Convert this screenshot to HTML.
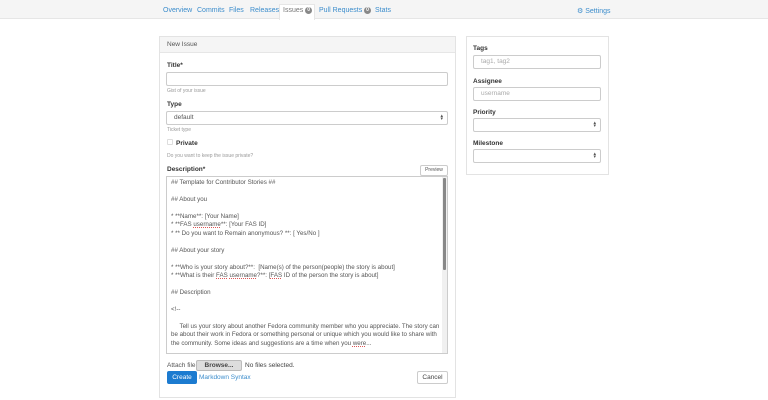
<!DOCTYPE html>
<html><head><meta charset="utf-8"><style>
*{box-sizing:border-box;margin:0;padding:0}
body{width:768px;height:400px;background:#fff;font-family:"Liberation Sans",sans-serif;color:#333;position:relative;overflow:hidden;font-size:7px}
.abs{position:absolute}
.nav{left:0;top:0;width:768px;height:19px;background:#f5f5f5;border-bottom:1px solid #e6e6e6}
.nav span{position:absolute;top:7px;color:#3c8dcc;font-size:7px}
.badge{display:inline-block;background:#888;color:#fff;border-radius:4px;font-size:5px;padding:0 2px;line-height:7px;vertical-align:1px}
.panel{border:1px solid #e3e3e3;background:#fff}
.lbl{font-weight:bold;font-size:6.5px;color:#333}
.help{font-size:5px;color:#999}
.inp{border:1px solid #ccc;border-radius:2px;background:#fff;font-size:6.5px;color:#aaa;padding-left:7px;line-height:12px}
.arr{position:absolute;right:4px;top:3px;font-size:5px;color:#555;line-height:3px}
.ta{border:1px solid #ccc;background:#fff;font-size:6.2px;color:#555;line-height:8.45px;padding:2px 8px 0 4px;overflow:hidden;white-space:pre}
u{text-decoration:underline dotted #d55;text-decoration-thickness:0.5px}
</style></head><body>
<div class="abs nav">
<span style="left:163px">Overview</span>
<span style="left:197px">Commits</span>
<span style="left:229px">Files</span>
<span style="left:250px">Releases</span>
<div class="abs" style="left:279px;top:4px;width:36px;height:16px;background:#fff;border:1px solid #e6e6e6;border-bottom:none"></div>
<span style="left:283px;color:#777">Issues <b class="badge">0</b></span>
<span style="left:319px">Pull Requests <b class="badge">0</b></span>
<span style="left:375px">Stats</span>
<span style="left:577px">⚙ Settings</span>
</div>

<div class="abs panel" style="left:159px;top:36px;width:297px;height:362px"></div>
<div class="abs" style="left:160px;top:37px;width:295px;height:16px;background:#f5f5f5;border-bottom:1px solid #e6e6e6"></div>
<div class="abs" style="left:167px;top:41px;font-size:6.5px;color:#555">New Issue</div>
<div class="abs lbl" style="left:167px;top:62px">Title*</div>
<div class="abs inp" style="left:166px;top:72px;width:282px;height:14px"></div>
<div class="abs help" style="left:167px;top:88px">Gist of your issue</div>
<div class="abs lbl" style="left:167px;top:101px">Type</div>
<div class="abs inp" style="left:166px;top:111px;width:282px;height:14px;color:#555">default<span class="arr">▴<br>▾</span></div>
<div class="abs help" style="left:167px;top:127px">Ticket type</div>
<div class="abs" style="left:167px;top:139px;width:6px;height:6px;border:1px solid #ddd;border-radius:1px"></div>
<div class="abs lbl" style="left:176px;top:140px">Private</div>
<div class="abs help" style="left:167px;top:153px">Do you want to keep the issue private?</div>
<div class="abs lbl" style="left:167px;top:166px">Description*</div>
<div class="abs" style="left:420px;top:165px;width:28px;height:11px;border:1px solid #ccc;border-radius:2px;font-size:5px;color:#555;text-align:center;line-height:9px">Preview</div>
<div class="abs ta" style="left:166px;top:176px;width:282px;height:178px">## Template for Contributor Stories ##

## About you

* **Name**: [Your Name]
* **FAS <u>username</u>**: [Your FAS ID]
* ** Do you want to Remain anonymous? **: [ Yes/No ]

## About your story

* **Who is your story about?**:  [Name(s) of the person(people) the story is about]
* **What is their <u>FAS</u> <u>username</u>?**: [<u>FAS</u> ID of the person the story is about]

## Description

&lt;!--

     Tell us your story about another Fedora community member who you appreciate. The story can
be about their work in Fedora or something personal or unique which you would like to share with
the community. Some ideas and suggestions are a time when you <u>were</u>...</div>
<div class="abs" style="left:442px;top:177px;width:5px;height:176px;background:#f0f0f0"></div>
<div class="abs" style="left:443px;top:178px;width:3px;height:92px;background:#888;border-radius:1px"></div>
<div class="abs" style="left:167px;top:362px;font-size:6.5px;color:#555">Attach file</div>
<div class="abs" style="left:196px;top:360px;width:46px;height:11px;background:#ddd;border:1px solid #bbb;border-radius:2px;font-size:6.5px;text-align:center;line-height:9px;font-weight:bold;color:#444">Browse...</div>
<div class="abs" style="left:245px;top:362px;font-size:6.5px;color:#444">No files selected.</div>
<div class="abs" style="left:167px;top:371px;width:30px;height:13px;background:#1c7bd0;border-radius:2px;color:#fff;font-size:6.5px;text-align:center;line-height:13px">Create</div>
<div class="abs" style="left:199px;top:374px;font-size:6.5px;color:#3c8dcc">Markdown Syntax</div>
<div class="abs" style="left:417px;top:371px;width:31px;height:13px;border:1px solid #ccc;border-radius:2px;font-size:6.5px;text-align:center;line-height:11px;color:#444">Cancel</div>

<div class="abs panel" style="left:466px;top:36px;width:143px;height:139px"></div>
<div class="abs lbl" style="left:473px;top:45px">Tags</div>
<div class="abs inp" style="left:473px;top:55px;width:128px;height:14px">tag1, tag2</div>
<div class="abs lbl" style="left:473px;top:78px">Assignee</div>
<div class="abs inp" style="left:473px;top:87px;width:128px;height:14px">username</div>
<div class="abs lbl" style="left:473px;top:109px">Priority</div>
<div class="abs inp" style="left:473px;top:118px;width:128px;height:14px"><span class="arr">▴<br>▾</span></div>
<div class="abs lbl" style="left:473px;top:140px">Milestone</div>
<div class="abs inp" style="left:473px;top:149px;width:128px;height:14px"><span class="arr">▴<br>▾</span></div>
</body></html>
